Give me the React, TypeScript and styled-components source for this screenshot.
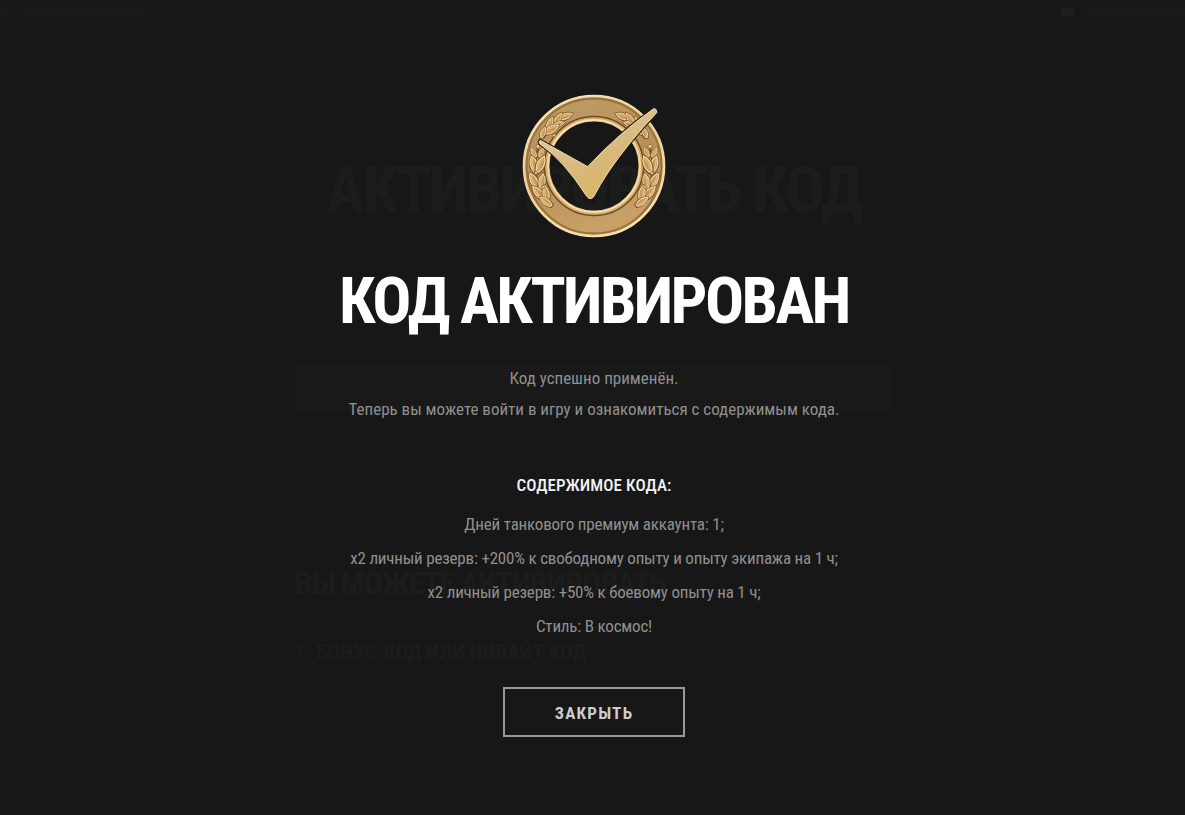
import React from "react";
import styled, { createGlobalStyle } from "styled-components";

const GlobalStyle = createGlobalStyle`
  * { box-sizing: border-box; }
  html, body { margin: 0; padding: 0; background: #171717; }
  body {
    font-family: "Roboto Condensed", Roboto, "Liberation Sans", sans-serif;
    font-stretch: 75%;
    overflow: hidden;
  }
`;

const Screen = styled.div`
  position: relative;
  width: 100%;
  height: 815px;
  background: #171717;
  overflow: hidden;
`;

/* Page that stays behind the dialog, almost fully dimmed */
const Backdrop = styled.div`
  position: absolute;
  inset: 0;
  color: #1c1c1c;
  user-select: none;
`;

const BackdropBar = styled.div`
  display: flex;
  align-items: center;
  gap: 8px;
  height: 24px;
`;

const BackdropMark = styled.span<{ $width: number; $push?: boolean; $strong?: boolean }>`
  width: ${(p) => p.$width}px;
  height: 8px;
  margin-left: ${(p) => (p.$push ? "auto" : "0")};
  background: ${(p) => (p.$strong ? "#1e1e1e" : "#191919")};
`;

const BackdropColumn = styled.div`
  width: 600px;
  margin: 0 auto;
  padding-left: 2px;
`;

const BackdropTitle = styled.div`
  margin-top: 128px;
  text-align: center;
  white-space: nowrap;
  font-size: 65px;
  line-height: 76px;
  font-weight: 700;
  letter-spacing: -2.6px;
`;

const BackdropField = styled.div`
  height: 48px;
  margin-top: 136px;
  background: #191919;
`;

const BackdropHeading = styled.div`
  margin-top: 152px;
  font-size: 32px;
  line-height: 38px;
  font-weight: 700;
  letter-spacing: -1.15px;
  color: #1c1c1c;
`;

const BackdropSubheading = styled.div`
  margin-top: 37px;
  font-size: 21px;
  line-height: 26px;
  font-weight: 700;
  color: #1c1c1c;
`;

const Dialog = styled.main`
  position: relative;
  display: flex;
  flex-direction: column;
  align-items: center;
  width: 1188px;
  padding-top: 85px;
  text-align: center;
`;

const Medal = styled.svg`
  display: block;
  width: 170px;
  height: 160px;
  margin-left: 2px;
`;

const Title = styled.h1`
  margin: 18px 0 0;
  font-size: 65px;
  line-height: 76px;
  font-weight: 700;
  letter-spacing: -2.6px;
  color: #fff;
  white-space: nowrap;
`;

const Message = styled.div`
  margin-top: 24px;
  font-size: 17px;
  line-height: 31px;
  color: #8f8f8f;
`;

const Line = styled.p`
  margin: 0;
  white-space: nowrap;
`;

const Subtitle = styled.h2`
  margin: 48px 0 0;
  font-size: 17px;
  line-height: 24px;
  font-weight: 500;
  letter-spacing: 0.1px;
  color: #f2f2f2;
`;

const Rewards = styled.ul`
  margin: 10px 0 0;
  padding: 0;
  list-style: none;
  font-size: 17px;
  line-height: 34px;
  letter-spacing: -0.2px;
  color: #8f8f8f;
`;

const Reward = styled.li`
  white-space: nowrap;
`;

const CloseButton = styled.button`
  width: 182px;
  height: 50px;
  margin-top: 44px;
  padding: 2px 0 0;
  border: 2px solid #999;
  background: transparent;
  font: inherit;
  font-size: 17px;
  font-weight: 700;
  letter-spacing: 1.2px;
  color: #ccc;
`;

const rewards = [
  "Дней танкового премиум аккаунта: 1;",
  "x2 личный резерв: +200% к свободному опыту и опыту экипажа на 1 ч;",
  "x2 личный резерв: +50% к боевому опыту на 1 ч;",
  "Стиль: В космос!",
];

/* x, y, rotation, scale of every leaf on the left branch */
const leaves = [
  [166, 94, 68, 1.1],
  [143, 101, 34, 1],
  [146, 117, 76, 0.9],
  [119, 115, 26, 1],
  [124, 133, 60, 1.25],
  [99, 143, 20, 0.9],
  [71, 203, -26, 0.8],
  [94, 202, 24, 0.8],
  [72, 240, -16, 1.35],
  [92, 238, 24, 1.35],
  [72, 288, -28, 1.3],
  [96, 290, 8, 1.2],
  [86, 324, -42, 1.3],
  [108, 325, -10, 1.2],
  [108, 350, -54, 1.1],
];

const Branch = () => (
  <g>
    <path d="M124 360C82 318 64 252 84 190M100 160Q120 118 164 94" fill="none" stroke="#80592a" strokeWidth="7" />
    {leaves.map(([x, y, r, s], i) => (
      <g key={i} transform={`translate(${x} ${y}) rotate(${r}) scale(${s})`}>
        <path d="M0-21Q15-3 4 20L-4 20Q-15-3 0-21Z" fill="#c1925a" stroke="#75502a" strokeWidth="5" />
        <path d="M0-20Q14-3 3 18L-3 18Q-14-3 0-20Z" fill="#c49a5e" stroke="#f0d29a" strokeWidth="3" />
        <path d="M-1-13Q-5 2-2 14" fill="none" stroke="#e3bf82" strokeWidth="3" />
      </g>
    ))}
    <g fill="#efcf94" stroke="#80592a" strokeWidth="2">
      <circle cx="99" cy="306" r="4.5" />
      <circle cx="78" cy="264" r="4.5" />
      <circle cx="84" cy="184" r="6" />
      <circle cx="132" cy="151" r="4.5" />
    </g>
  </g>
);

const tickPath =
  "M91 166L233 245Q330 142 430 72Q440 69 440 83Q355 172 293 264Q270 299 251 335Q240 348 229 332Q160 225 90 177Q84 169 91 166Z";

const SuccessMedal = () => (
  <Medal viewBox="0 0 510 480" aria-hidden="true">
    <defs>
      <linearGradient id="band" x1="0.3" y1="0" x2="0.6" y2="1">
        <stop offset="0" stopColor="#bd9963" />
        <stop offset="0.5" stopColor="#b88f57" />
        <stop offset="1" stopColor="#c8a167" />
      </linearGradient>
      <linearGradient id="rim" x1="0" y1="0" x2="0.4" y2="1">
        <stop offset="0" stopColor="#fbe6bb" />
        <stop offset="0.5" stopColor="#ecd09b" />
        <stop offset="1" stopColor="#f6deab" />
      </linearGradient>
      <linearGradient id="tick" x1="0.2" y1="0.2" x2="0.7" y2="1">
        <stop offset="0" stopColor="#dfc598" />
        <stop offset="0.55" stopColor="#d8b877" />
        <stop offset="1" stopColor="#dab661" />
      </linearGradient>
    </defs>
    <circle cx="252" cy="243" r="174" fill="none" stroke="url(#band)" strokeWidth="76" />
    <circle cx="252" cy="243" r="203" fill="none" stroke="#9a733f" strokeWidth="8" />
    <circle cx="252" cy="243" r="210" fill="none" stroke="url(#rim)" strokeWidth="8" />
    <circle cx="252" cy="243" r="148" fill="none" stroke="#6d4c25" strokeWidth="6" />
    <circle cx="252" cy="243" r="140" fill="none" stroke="#d3ad70" strokeWidth="13" />
    <circle cx="252" cy="243" r="138" fill="none" stroke="url(#rim)" strokeWidth="6" />
    <Branch />
    <g transform="translate(504 0) scale(-1 1)">
      <Branch />
    </g>
    <path d={tickPath} fill="none" stroke="#2a1d12" strokeWidth="9" strokeLinejoin="round" />
    <path d={tickPath} fill="url(#tick)" stroke="#f0dfc6" strokeWidth="3" strokeLinejoin="round" />
  </Medal>
);

export default function App() {
  return (
    <Screen>
      <GlobalStyle />
      <Backdrop aria-hidden="true">
        <BackdropBar>
          <BackdropMark $width={9} />
          <BackdropMark $width={128} />
          <BackdropMark $width={13} $push $strong />
          <BackdropMark $width={103} />
        </BackdropBar>
        <BackdropColumn>
          <BackdropTitle>АКТИВИРОВАТЬ КОД</BackdropTitle>
          <BackdropField />
          <BackdropHeading>ВЫ МОЖЕТЕ АКТИВИРОВАТЬ</BackdropHeading>
          <BackdropSubheading>1. БОНУС-КОД ИЛИ ИНВАЙТ-КОД</BackdropSubheading>
        </BackdropColumn>
      </Backdrop>
      <Dialog>
        <SuccessMedal />
        <Title>КОД АКТИВИРОВАН</Title>
        <Message>
          <Line>Код успешно применён.</Line>
          <Line>Теперь вы можете войти в игру и ознакомиться с содержимым кода.</Line>
        </Message>
        <Subtitle>СОДЕРЖИМОЕ КОДА:</Subtitle>
        <Rewards>
          {rewards.map((text) => (
            <Reward key={text}>{text}</Reward>
          ))}
        </Rewards>
        <CloseButton type="button">ЗАКРЫТЬ</CloseButton>
      </Dialog>
    </Screen>
  );
}
